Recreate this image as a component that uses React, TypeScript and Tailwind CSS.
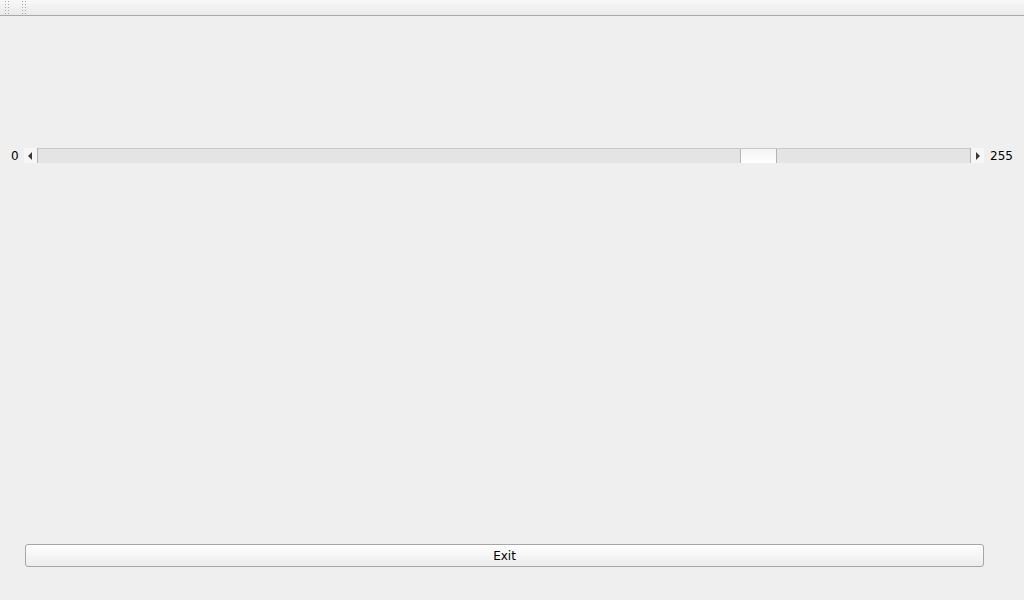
import React from 'react';

const Grip: React.FC = () => (
  <svg width="5" height="15" className="block">
    {[1, 4, 7, 10, 13].map((y) => (
      <g key={y}>
        <rect x="0" y={y} width="1" height="1" fill="#a8a8a8" />
        <rect x="3" y={y} width="1" height="1" fill="#a8a8a8" />
      </g>
    ))}
  </svg>
);

const Arrow: React.FC<{ dir: 'left' | 'right' }> = ({ dir }) => (
  <svg width="5" height="8" className="block">
    {dir === 'left' ? (
      <polygon points="4,0 4,8 0,4" fill="#3a3a3a" />
    ) : (
      <polygon points="1,0 1,8 5,4" fill="#3a3a3a" />
    )}
  </svg>
);

const Scrollbar: React.FC = () => (
  <div className="flex h-[15px] w-[960px]">
    <div className="flex w-[14px] items-center justify-center bg-[#f6f6f6] border-r border-[#b4b4b4]">
      <Arrow dir="left" />
    </div>
    <div className="flex flex-1 bg-[#e4e4e4] border-t border-[#c8c8c8]">
      <div className="w-[702px]" />
      <div className="w-[37px] border-x border-[#b4b4b4] bg-gradient-to-b from-[#f4f4f4] to-white" />
      <div className="flex-1" />
    </div>
    <div className="flex w-[14px] items-center justify-center bg-[#f6f6f6] border-l border-[#b4b4b4]">
      <Arrow dir="right" />
    </div>
  </div>
);

export default function App() {
  return (
    <div className="flex h-[600px] w-[1024px] flex-col bg-[#efefef] text-[12px] text-black font-['DejaVu_Sans',sans-serif]">
      <div className="flex h-4 items-start gap-[12px] border-b border-[#a8a8a8] bg-gradient-to-b from-[#f8f8f8] to-[#eaeaea] pl-[5px]">
        <Grip />
        <Grip />
      </div>
      <div className="mt-[132px] flex items-center">
        <span className="w-[24px] pl-[11px] leading-none">0</span>
        <Scrollbar />
        <span className="pl-[6px] leading-none">255</span>
      </div>
      <div className="flex-1" />
      <div className="pb-[33px] pl-[25px]">
        <button className="flex h-[23px] w-[959px] items-center justify-center rounded-[3px] border border-[#a6a6a6] bg-gradient-to-b from-white to-[#ececec]">
          Exit
        </button>
      </div>
    </div>
  );
}
